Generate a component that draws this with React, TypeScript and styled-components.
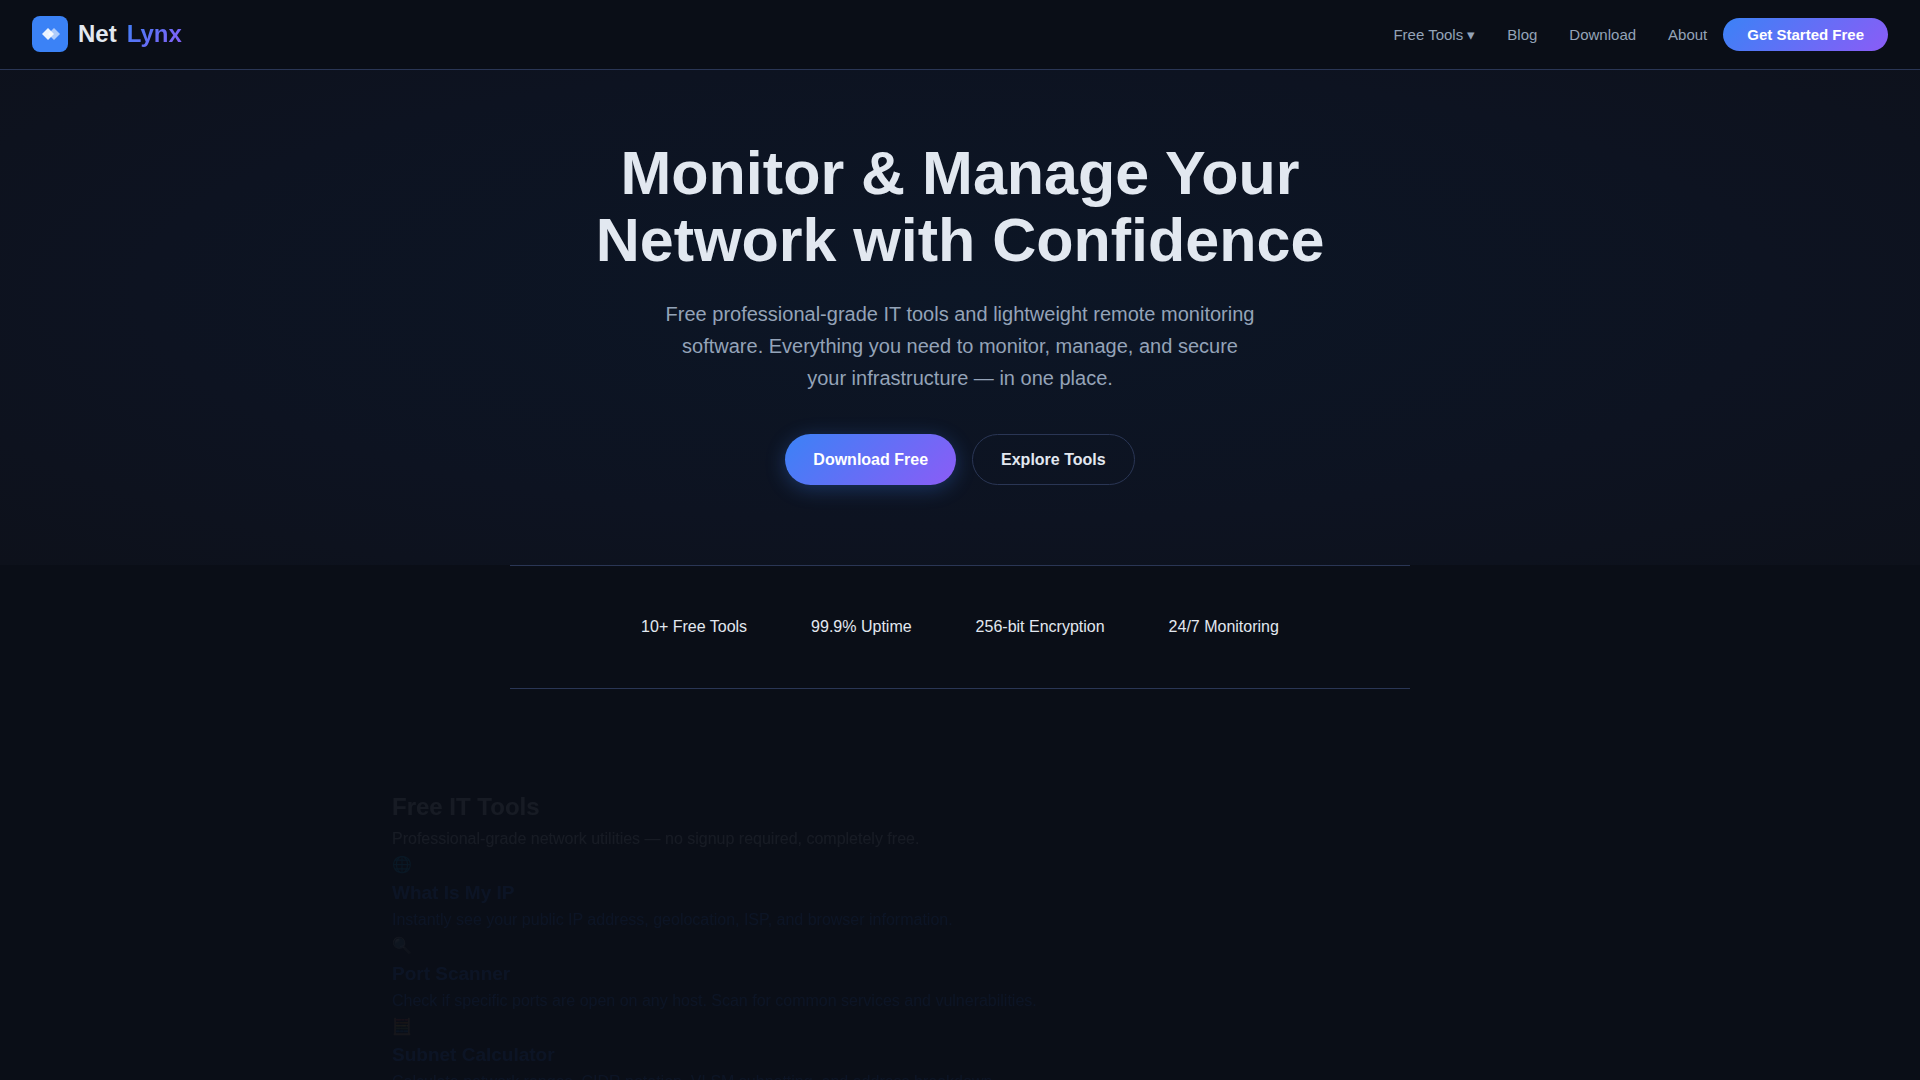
import React from "react";
import styled, { createGlobalStyle, css } from "styled-components";

const GlobalStyle = createGlobalStyle`
  *, *::before, *::after { box-sizing: border-box; margin: 0; padding: 0; }
  html { background: #0a0e17; }
  body {
    font-family: "Liberation Sans", Arial, sans-serif;
    font-size: 16px;
    line-height: 26px;
    color: #e2e8f0;
    background: #0a0e17;
    overflow-x: hidden;
  }
`;

const accent = "linear-gradient(135deg, #3b82f6, #8b5cf6)";
const line = "#2a3655";

const Header = styled.header`
  display: flex;
  align-items: center;
  justify-content: space-between;
  height: 70px;
  padding: 0 32px;
  border-bottom: 1px solid ${line};
`;

const Brand = styled.a`
  display: flex;
  align-items: center;
  gap: 10px;
  padding-bottom: 2px;
  font-size: 24px;
  line-height: 36px;
  font-weight: 700;
  color: #e2e8f0;
  text-decoration: none;
`;

const BrandAccent = styled.span`
  background: ${accent};
  background-clip: text;
  -webkit-background-clip: text;
  color: transparent;
`;

const Nav = styled.nav`
  display: flex;
  align-items: center;
  gap: 16px;
`;

const NavList = styled.ul`
  display: flex;
  gap: 32px;
  list-style: none;
`;

const NavLink = styled.a`
  font-size: 15px;
  color: #94a3b8;
  text-decoration: none;
`;

const Button = styled.button<{ $kind: "primary" | "outline"; $small?: boolean }>`
  font-family: inherit;
  font-weight: 600;
  border: 0;
  border-radius: 50px;
  cursor: pointer;
  ${(p) =>
    p.$small
      ? css`
          font-size: 15px;
          line-height: 17px;
          padding: 8px 24px;
        `
      : css`
          font-size: 16px;
          line-height: 23px;
          padding: 14px 28px;
        `}
  ${(p) =>
    p.$kind === "primary"
      ? css`
          color: #fff;
          background: ${accent};
        `
      : css`
          color: #e2e8f0;
          background: transparent;
          padding: 13px 28px;
          border: 1px solid ${line};
        `}
  ${(p) =>
    p.$kind === "primary" &&
    !p.$small &&
    css`
      box-shadow: 0 4px 20px rgba(59, 130, 246, 0.3);
    `}
`;

const Hero = styled.section`
  display: flex;
  flex-direction: column;
  align-items: center;
  padding: 70px 32px 80px;
  text-align: center;
  background: radial-gradient(ellipse at 50% 45%, #0c1626 0%, #0d1321 60%, #0d111b 100%);
`;

const HeroTitle = styled.h1`
  max-width: 800px;
  font-size: 61px;
  line-height: 67px;
  font-weight: 800;
`;

const HeroText = styled.p`
  max-width: 600px;
  margin: 24px 0 40px;
  font-size: 20px;
  line-height: 32px;
  color: #94a3b8;
`;

const Actions = styled.div`
  display: flex;
  gap: 16px;
`;

const Stats = styled.ul`
  display: flex;
  justify-content: center;
  gap: 64px;
  max-width: 900px;
  margin: 0 auto;
  padding: 48px 0;
  list-style: none;
  border-top: 1px solid ${line};
  border-bottom: 1px solid ${line};
`;

const Tools = styled.section`
  max-width: 1200px;
  margin: 0 auto;
  padding: 99px 32px;
  opacity: 0.06;
`;

const ToolsTitle = styled.h2`
  font-size: 24px;
  line-height: 38px;
`;

const ToolCard = styled.a`
  display: block;
  color: #2f7bff;
  text-decoration: none;
`;

const ToolIcon = styled.div`
  line-height: 26px;
`;

const ToolName = styled.h3`
  font-size: 19px;
  line-height: 29px;
`;

const links = ["Free Tools ▾", "Blog", "Download", "About"];
const stats = ["10+ Free Tools", "99.9% Uptime", "256-bit Encryption", "24/7 Monitoring"];
const tools = [
  { icon: "🌐", name: "What Is My IP", text: "Instantly see your public IP address, geolocation, ISP, and browser information." },
  { icon: "🔍", name: "Port Scanner", text: "Check if specific ports are open on any host. Scan for common services and vulnerabilities." },
  { icon: "🧮", name: "Subnet Calculator", text: "Calculate network ranges, CIDR notation, VLSM subnetting, and address breakdown." },
];

const Logo = () => (
  <svg width="36" height="36" viewBox="0 0 36 36" aria-hidden="true">
    <rect width="36" height="36" rx="8" fill="#3b82f6" />
    <path d="M16 12l6 6-6 6-6-6z" fill="#fff" fillOpacity="0.9" />
    <path d="M22 12l6 6-6 6-6-6z" fill="#fff" fillOpacity="0.6" />
  </svg>
);

export default function App() {
  return (
    <>
      <GlobalStyle />
      <Header>
        <Brand href="#">
          <Logo />
          Net <BrandAccent>Lynx</BrandAccent>
        </Brand>
        <Nav>
          <NavList>
            {links.map((label) => (
              <li key={label}>
                <NavLink href="#">{label}</NavLink>
              </li>
            ))}
          </NavList>
          <Button $kind="primary" $small>Get Started Free</Button>
        </Nav>
      </Header>
      <main>
        <Hero>
          <HeroTitle>Monitor &amp; Manage Your Network with Confidence</HeroTitle>
          <HeroText>
            Free professional-grade IT tools and lightweight remote monitoring software. Everything you
            need to monitor, manage, and secure your infrastructure — in one place.
          </HeroText>
          <Actions>
            <Button $kind="primary">Download Free</Button>
            <Button $kind="outline">Explore Tools</Button>
          </Actions>
        </Hero>
        <Stats>
          {stats.map((s) => (
            <li key={s}>{s}</li>
          ))}
        </Stats>
        <Tools>
          <ToolsTitle>Free IT Tools</ToolsTitle>
          <p>Professional-grade network utilities — no signup required, completely free.</p>
          {tools.map((t) => (
            <ToolCard key={t.name} href="#">
              <ToolIcon>{t.icon}</ToolIcon>
              <ToolName>{t.name}</ToolName>
              <p>{t.text}</p>
            </ToolCard>
          ))}
        </Tools>
      </main>
    </>
  );
}
